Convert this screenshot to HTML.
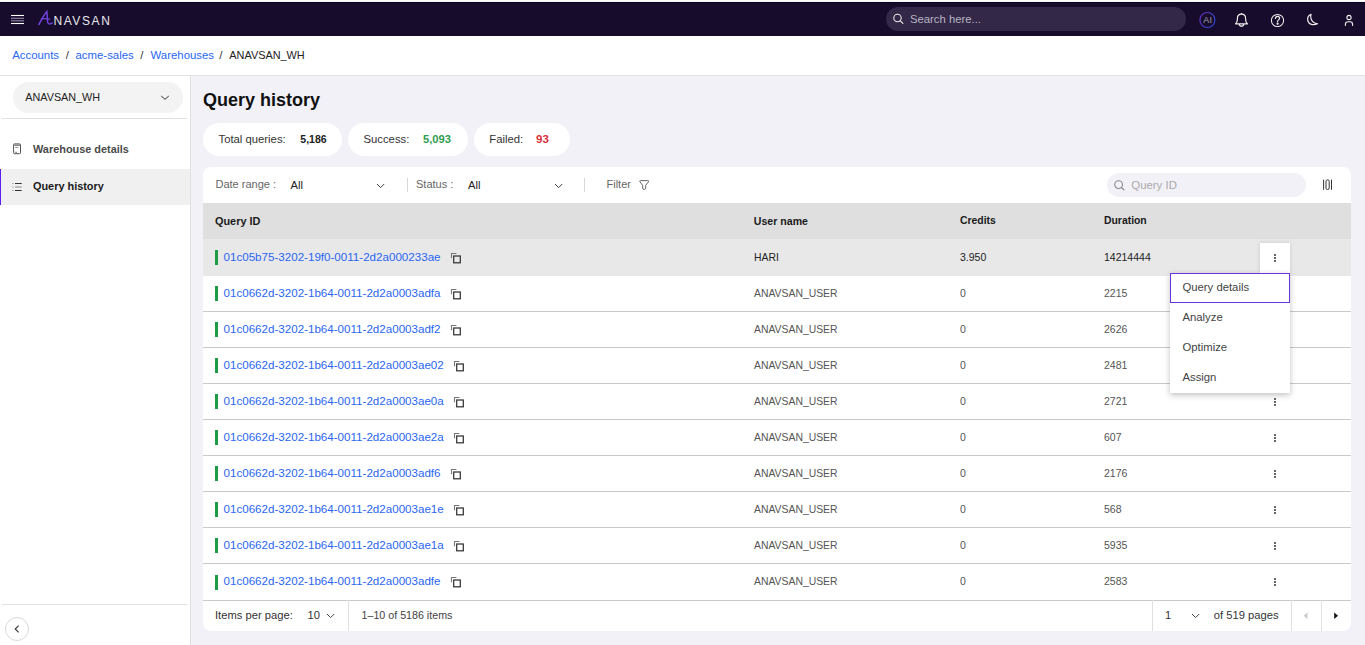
<!DOCTYPE html>
<html><head><meta charset="utf-8">
<style>
*{box-sizing:border-box;margin:0;padding:0}
html,body{width:1365px;height:645px;overflow:hidden;background:#fff;font-family:"Liberation Sans",sans-serif;color:#222;position:relative}
.abs{position:absolute}
.t{position:absolute;white-space:nowrap;line-height:1}
</style></head>
<body>
<div class="abs" style="left:0px;top:0px;width:1365px;height:1px;background:#fcfcfc"></div>
<div class="abs" style="left:0px;top:1px;width:1365px;height:1px;background:#f6f6f4"></div>
<div class="abs" style="left:0px;top:2px;width:1365px;height:34px;background:#170c2c"></div>
<div class="abs" style="left:0px;top:2px;width:1365px;height:1px;background:#0a0420"></div>
<svg class="abs" style="left:0;top:0" width="130" height="36"><g stroke="#fff" stroke-width="1.1"><line x1="11" y1="15.5" x2="24" y2="15.5"/><line x1="11" y1="18.3" x2="24" y2="18.3" stroke="#948aa8"/><line x1="11" y1="20.8" x2="24" y2="20.8" stroke="#948aa8"/><line x1="11" y1="23.5" x2="24" y2="23.5"/></g><path d="M38.8 24.6 C41.5 19.5 44.5 14 46.8 11.4 C47.2 14.5 47.3 19 47.7 22.4 C48.2 24.4 50 24.2 52.2 22.8" fill="none" stroke="#7142d9" stroke-width="1.5" stroke-linecap="round"/><path d="M41.3 18.8 C44 18.6 47 18.6 49.6 19.2" fill="none" stroke="#7142d9" stroke-width="1.3" stroke-linecap="round"/></svg>
<div class="t" style="left:53.40px;top:15px;font-size:12px;color:#e8e8ec;font-weight:normal;letter-spacing:1.6px">NAVSAN</div>
<div class="abs" style="left:886px;top:7px;width:300px;height:24px;background:#342848;border-radius:12px"></div>
<svg class="abs" style="left:890px;top:10px" width="18" height="18"><circle cx="7.5" cy="8" r="3.7" fill="none" stroke="#e8e8e8" stroke-width="1.1"/><line x1="10.3" y1="10.8" x2="12.9" y2="13.4" stroke="#e8e8e8" stroke-width="1.2" stroke-linecap="round"/></svg>
<div class="t" style="left:910.00px;top:14px;font-size:11.3px;color:#b8b4c4;font-weight:normal;">Search here...</div>
<svg class="abs" style="left:1190px;top:4px" width="175" height="32"><defs><linearGradient id="aig" x1="0" y1="0.2" x2="1" y2="0.8"><stop offset="0" stop-color="#6630c0"/><stop offset="1" stop-color="#2a4ad0"/></linearGradient></defs><circle cx="17.4" cy="16" r="7.5" fill="none" stroke="url(#aig)" stroke-width="1.2"/><g fill="none" stroke="#eee" stroke-width="1.2" stroke-linejoin="round"><path d="M45.6 19.8 C46.9 18.7 47.4 17.3 47.4 15.3 L47.4 14.4 C47.4 11.8 49.2 10.1 51.5 10.1 C53.8 10.1 55.6 11.8 55.6 14.4 L55.6 15.3 C55.6 17.3 56.1 18.7 57.4 19.8 Z"/><path d="M49.3 19.9 A2.2 2.2 0 0 0 53.7 19.9"/><line x1="51.5" y1="10" x2="51.5" y2="9.1"/><circle cx="87.5" cy="16.5" r="6.1" stroke-width="1.05"/><path d="M85.5 14.5 C85.5 12.9 86.5 12.3 87.6 12.3 C88.8 12.3 89.6 13.1 89.6 14.2 C89.6 15.6 87.6 15.8 87.6 17.6" stroke-linecap="round"/><circle cx="87.6" cy="19.7" r="0.5" fill="#eee"/><path d="M121 10.3 C118.2 11.5 117.2 14.5 118 17.3 C119 20.3 122.8 21.8 127.6 19.8 C124.3 19.3 121.8 17.4 121 14.6 C120.6 13.1 120.6 11.6 121 10.3 Z"/><circle cx="159" cy="13.5" r="2.1" stroke-width="1.1"/><path d="M155.4 21.4 L155.4 20.4 C155.4 18.8 156.5 17.8 158 17.8 L160 17.8 C161.5 17.8 162.6 18.8 162.6 20.4 L162.6 21.4" stroke-linecap="round" stroke-width="1.1"/></g></svg>
<div class="t" style="left:1203.20px;top:16px;font-size:9px;color:#a0a0aa;font-weight:normal;letter-spacing:0.3px">AI</div>
<div class="abs" style="left:0px;top:36px;width:1365px;height:39px;background:#fff"></div>
<div class="abs" style="left:0px;top:75px;width:1365px;height:1px;background:#e2e2e2"></div>
<div class="t" style="left:12.20px;top:50px;font-size:11.4px;color:#2a66f2;font-weight:normal;">Accounts</div>
<div class="t" style="left:65.80px;top:50px;font-size:11.4px;color:#333;font-weight:normal;">/</div>
<div class="t" style="left:75.50px;top:50px;font-size:11.4px;color:#2a66f2;font-weight:normal;">acme-sales</div>
<div class="t" style="left:140.20px;top:50px;font-size:11.4px;color:#333;font-weight:normal;">/</div>
<div class="t" style="left:150.50px;top:50px;font-size:11.4px;color:#2a66f2;font-weight:normal;">Warehouses</div>
<div class="t" style="left:219.20px;top:50px;font-size:11.4px;color:#333;font-weight:normal;">/</div>
<div class="t" style="left:229.30px;top:50px;font-size:10.9px;color:#222;font-weight:normal;">ANAVSAN_WH</div>
<div class="abs" style="left:0px;top:76px;width:190px;height:569px;background:#fff"></div>
<div class="abs" style="left:190px;top:76px;width:1px;height:569px;background:#e0e0e0"></div>
<div class="abs" style="left:13px;top:82px;width:170px;height:31px;background:#f3f3f3;border-radius:16px"></div>
<div class="t" style="left:25.30px;top:92px;font-size:10.8px;color:#222;font-weight:normal;">ANAVSAN_WH</div>
<svg class="abs" style="left:155px;top:90px" width="20" height="16"><path d="M6.2 6 L10 9.3 L13.8 6" fill="none" stroke="#333" stroke-width="1"/></svg>
<div class="abs" style="left:2px;top:118px;width:185px;height:1px;background:#e0e0e0"></div>
<svg class="abs" style="left:8px;top:138px" width="20" height="22"><rect x="5.6" y="5.9" width="6.9" height="9.8" rx="0.8" fill="none" stroke="#555" stroke-width="1"/><line x1="6.2" y1="7.2" x2="12" y2="7.2" stroke="#555" stroke-width="1"/><line x1="7.2" y1="9.4" x2="10.3" y2="9.4" stroke="#777" stroke-width="0.8"/><line x1="7.3" y1="14.3" x2="8.8" y2="14.3" stroke="#555" stroke-width="1"/></svg>
<div class="t" style="left:33.00px;top:144px;font-size:10.9px;color:#4a4a4a;font-weight:bold;">Warehouse details</div>
<div class="abs" style="left:0px;top:169px;width:190px;height:36px;background:#f0f0f0"></div>
<div class="abs" style="left:0px;top:169px;width:1px;height:36px;background:#5a1ff0"></div>
<svg class="abs" style="left:8px;top:176px" width="20" height="22"><g stroke="#333" stroke-width="1"><line x1="4.3" y1="7.5" x2="5.6" y2="7.5" stroke="#999"/><line x1="4.3" y1="11" x2="5.6" y2="11" stroke="#999"/><line x1="4.3" y1="14.5" x2="5.6" y2="14.5" stroke="#999"/><line x1="7" y1="7.5" x2="13.7" y2="7.5"/><line x1="7" y1="11" x2="13.7" y2="11" stroke="#888"/><line x1="7" y1="14.5" x2="13.7" y2="14.5"/></g></svg>
<div class="t" style="left:33.00px;top:181px;font-size:10.9px;color:#1a1a1a;font-weight:bold;">Query history</div>
<div class="abs" style="left:2px;top:604px;width:185px;height:1px;background:#e0e0e0"></div>
<svg class="abs" style="left:4px;top:616px" width="27" height="27"><circle cx="13" cy="13" r="11.5" fill="#fff" stroke="#d8d8d8" stroke-width="1"/><path d="M14.6 9.6 L11.2 13 L14.6 16.4" fill="none" stroke="#333" stroke-width="1.1"/></svg>
<div class="abs" style="left:191px;top:76px;width:1174px;height:569px;background:#f3f1f8"></div>
<div class="t" style="left:203.00px;top:91px;font-size:18px;color:#111;font-weight:bold;">Query history</div>
<div class="abs" style="left:203px;top:123px;width:139px;height:33px;background:#fff;border-radius:17px"></div>
<div class="abs" style="left:348px;top:123px;width:120px;height:33px;background:#fff;border-radius:17px"></div>
<div class="abs" style="left:474px;top:123px;width:96px;height:33px;background:#fff;border-radius:17px"></div>
<div class="t" style="left:218.50px;top:134px;font-size:11.3px;color:#333;font-weight:normal;">Total queries:</div>
<div class="t" style="left:300.30px;top:134px;font-size:10.5px;color:#222;font-weight:bold;">5,186</div>
<div class="t" style="left:363.50px;top:134px;font-size:11.3px;color:#333;font-weight:normal;">Success:</div>
<div class="t" style="left:423.00px;top:134px;font-size:11.2px;color:#2e9e4e;font-weight:bold;">5,093</div>
<div class="t" style="left:489.30px;top:134px;font-size:11.3px;color:#333;font-weight:normal;">Failed:</div>
<div class="t" style="left:536.00px;top:134px;font-size:11.5px;color:#d9303a;font-weight:bold;">93</div>
<div class="abs" style="left:203px;top:167px;width:1148px;height:464px;background:#fff;border-radius:8px;overflow:hidden"></div>
<div class="t" style="left:215.50px;top:179px;font-size:11px;color:#666;font-weight:normal;">Date range :</div>
<div class="t" style="left:290.50px;top:180px;font-size:11.2px;color:#222;font-weight:normal;">All</div>
<svg class="abs" style="left:375px;top:182px" width="12" height="8"><path d="M2 2 L5.6 5.6 L9.2 2" fill="none" stroke="#444" stroke-width="1"/></svg>
<div class="abs" style="left:407px;top:178px;width:1px;height:14px;background:#d8d8d8"></div>
<div class="t" style="left:416.00px;top:179px;font-size:11px;color:#666;font-weight:normal;">Status :</div>
<div class="t" style="left:468.00px;top:180px;font-size:11.2px;color:#222;font-weight:normal;">All</div>
<svg class="abs" style="left:553px;top:182px" width="12" height="8"><path d="M2 2 L5.6 5.6 L9.2 2" fill="none" stroke="#444" stroke-width="1"/></svg>
<div class="abs" style="left:584px;top:178px;width:1px;height:14px;background:#d8d8d8"></div>
<div class="t" style="left:606.50px;top:179px;font-size:11px;color:#666;font-weight:normal;">Filter</div>
<svg class="abs" style="left:636px;top:177px" width="16" height="16"><path d="M4.6 3.6 L11.8 3.6 Q13.2 3.6 12.4 4.9 L9.7 8.3 L9.7 11.3 Q9.7 12.4 8.2 12.4 Q6.7 12.4 6.7 11.3 L6.7 8.3 L4 4.9 Q3.2 3.6 4.6 3.6 Z" fill="none" stroke="#666" stroke-width="1" stroke-linejoin="round"/></svg>
<div class="abs" style="left:1107px;top:173px;width:199px;height:24px;background:#f3f1f8;border-radius:12px"></div>
<svg class="abs" style="left:1110px;top:177px" width="18" height="16"><circle cx="8.6" cy="7.6" r="3.9" fill="none" stroke="#888" stroke-width="1.1"/><line x1="11.5" y1="10.5" x2="14" y2="13" stroke="#888" stroke-width="1.1" stroke-linecap="round"/></svg>
<div class="t" style="left:1131.30px;top:180px;font-size:11.4px;color:#aaa;font-weight:normal;">Query ID</div>
<svg class="abs" style="left:1320px;top:177px" width="16" height="16"><g stroke="#333" stroke-width="1"><line x1="3.6" y1="2.6" x2="3.6" y2="12.8"/><line x1="11.5" y1="2.6" x2="11.5" y2="12.8"/></g><rect x="6" y="2.9" width="3.2" height="9.6" rx="1.4" fill="none" stroke="#333" stroke-width="1"/></svg>
<div class="abs" style="left:203px;top:203px;width:1148px;height:36px;background:#dfdfdf"></div>
<div class="t" style="left:215.00px;top:216px;font-size:10.9px;color:#1a1a1a;font-weight:bold;">Query ID</div>
<div class="t" style="left:753.80px;top:216px;font-size:10.6px;color:#1a1a1a;font-weight:bold;">User name</div>
<div class="t" style="left:960.00px;top:216px;font-size:10.4px;color:#1a1a1a;font-weight:bold;">Credits</div>
<div class="t" style="left:1104.00px;top:216px;font-size:10.4px;color:#1a1a1a;font-weight:bold;">Duration</div>
<div class="abs" style="left:203px;top:239px;width:1148px;height:37px;background:#e8e8e8"></div>
<div class="abs" style="left:215px;top:250px;width:3px;height:15px;background:#1f9a45"></div>
<div class="t" style="left:223.50px;top:251px;font-size:11.6px;color:#2a66f2;font-weight:normal;">01c05b75-3202-19f0-0011-2d2a000233ae<svg style="position:absolute;right:-20px;top:1px" width="12" height="13"><path d="M2.5 6.2 L2.5 1.5 L7.4 1.5" fill="none" stroke="#777" stroke-width="1.1"/><rect x="4.7" y="4" width="6.6" height="6.8" fill="none" stroke="#333" stroke-width="1.25"/></svg></div>
<div class="t" style="left:754.00px;top:253px;font-size:10.4px;color:#222;font-weight:normal;">HARI</div>
<div class="t" style="left:960.00px;top:252px;font-size:10.5px;color:#222;font-weight:normal;">3.950</div>
<div class="t" style="left:1104.00px;top:252px;font-size:10.5px;color:#222;font-weight:normal;">14214444</div>
<div class="abs" style="left:203px;top:311px;width:1148px;height:1px;background:#c9c9c9"></div>
<div class="abs" style="left:215px;top:286px;width:3px;height:15px;background:#1f9a45"></div>
<div class="t" style="left:223.50px;top:287px;font-size:11.6px;color:#2a66f2;font-weight:normal;">01c0662d-3202-1b64-0011-2d2a0003adfa<svg style="position:absolute;right:-20px;top:1px" width="12" height="13"><path d="M2.5 6.2 L2.5 1.5 L7.4 1.5" fill="none" stroke="#777" stroke-width="1.1"/><rect x="4.7" y="4" width="6.6" height="6.8" fill="none" stroke="#333" stroke-width="1.25"/></svg></div>
<div class="t" style="left:754.00px;top:289px;font-size:10.4px;color:#555;font-weight:normal;">ANAVSAN_USER</div>
<div class="t" style="left:960.00px;top:288px;font-size:10.5px;color:#555;font-weight:normal;">0</div>
<div class="t" style="left:1104.00px;top:288px;font-size:10.5px;color:#555;font-weight:normal;">2215</div>
<div class="abs" style="left:203px;top:347px;width:1148px;height:1px;background:#c9c9c9"></div>
<div class="abs" style="left:215px;top:322px;width:3px;height:15px;background:#1f9a45"></div>
<div class="t" style="left:223.50px;top:323px;font-size:11.6px;color:#2a66f2;font-weight:normal;">01c0662d-3202-1b64-0011-2d2a0003adf2<svg style="position:absolute;right:-20px;top:1px" width="12" height="13"><path d="M2.5 6.2 L2.5 1.5 L7.4 1.5" fill="none" stroke="#777" stroke-width="1.1"/><rect x="4.7" y="4" width="6.6" height="6.8" fill="none" stroke="#333" stroke-width="1.25"/></svg></div>
<div class="t" style="left:754.00px;top:325px;font-size:10.4px;color:#555;font-weight:normal;">ANAVSAN_USER</div>
<div class="t" style="left:960.00px;top:324px;font-size:10.5px;color:#555;font-weight:normal;">0</div>
<div class="t" style="left:1104.00px;top:324px;font-size:10.5px;color:#555;font-weight:normal;">2626</div>
<div class="abs" style="left:203px;top:383px;width:1148px;height:1px;background:#c9c9c9"></div>
<div class="abs" style="left:215px;top:358px;width:3px;height:15px;background:#1f9a45"></div>
<div class="t" style="left:223.50px;top:359px;font-size:11.6px;color:#2a66f2;font-weight:normal;">01c0662d-3202-1b64-0011-2d2a0003ae02<svg style="position:absolute;right:-20px;top:1px" width="12" height="13"><path d="M2.5 6.2 L2.5 1.5 L7.4 1.5" fill="none" stroke="#777" stroke-width="1.1"/><rect x="4.7" y="4" width="6.6" height="6.8" fill="none" stroke="#333" stroke-width="1.25"/></svg></div>
<div class="t" style="left:754.00px;top:361px;font-size:10.4px;color:#555;font-weight:normal;">ANAVSAN_USER</div>
<div class="t" style="left:960.00px;top:360px;font-size:10.5px;color:#555;font-weight:normal;">0</div>
<div class="t" style="left:1104.00px;top:360px;font-size:10.5px;color:#555;font-weight:normal;">2481</div>
<div class="abs" style="left:203px;top:419px;width:1148px;height:1px;background:#c9c9c9"></div>
<div class="abs" style="left:215px;top:394px;width:3px;height:15px;background:#1f9a45"></div>
<div class="t" style="left:223.50px;top:395px;font-size:11.6px;color:#2a66f2;font-weight:normal;">01c0662d-3202-1b64-0011-2d2a0003ae0a<svg style="position:absolute;right:-20px;top:1px" width="12" height="13"><path d="M2.5 6.2 L2.5 1.5 L7.4 1.5" fill="none" stroke="#777" stroke-width="1.1"/><rect x="4.7" y="4" width="6.6" height="6.8" fill="none" stroke="#333" stroke-width="1.25"/></svg></div>
<div class="t" style="left:754.00px;top:397px;font-size:10.4px;color:#555;font-weight:normal;">ANAVSAN_USER</div>
<div class="t" style="left:960.00px;top:396px;font-size:10.5px;color:#555;font-weight:normal;">0</div>
<div class="t" style="left:1104.00px;top:396px;font-size:10.5px;color:#555;font-weight:normal;">2721</div>
<div class="abs" style="left:203px;top:455px;width:1148px;height:1px;background:#c9c9c9"></div>
<div class="abs" style="left:215px;top:430px;width:3px;height:15px;background:#1f9a45"></div>
<div class="t" style="left:223.50px;top:431px;font-size:11.6px;color:#2a66f2;font-weight:normal;">01c0662d-3202-1b64-0011-2d2a0003ae2a<svg style="position:absolute;right:-20px;top:1px" width="12" height="13"><path d="M2.5 6.2 L2.5 1.5 L7.4 1.5" fill="none" stroke="#777" stroke-width="1.1"/><rect x="4.7" y="4" width="6.6" height="6.8" fill="none" stroke="#333" stroke-width="1.25"/></svg></div>
<div class="t" style="left:754.00px;top:433px;font-size:10.4px;color:#555;font-weight:normal;">ANAVSAN_USER</div>
<div class="t" style="left:960.00px;top:432px;font-size:10.5px;color:#555;font-weight:normal;">0</div>
<div class="t" style="left:1104.00px;top:432px;font-size:10.5px;color:#555;font-weight:normal;">607</div>
<div class="abs" style="left:203px;top:491px;width:1148px;height:1px;background:#c9c9c9"></div>
<div class="abs" style="left:215px;top:466px;width:3px;height:15px;background:#1f9a45"></div>
<div class="t" style="left:223.50px;top:467px;font-size:11.6px;color:#2a66f2;font-weight:normal;">01c0662d-3202-1b64-0011-2d2a0003adf6<svg style="position:absolute;right:-20px;top:1px" width="12" height="13"><path d="M2.5 6.2 L2.5 1.5 L7.4 1.5" fill="none" stroke="#777" stroke-width="1.1"/><rect x="4.7" y="4" width="6.6" height="6.8" fill="none" stroke="#333" stroke-width="1.25"/></svg></div>
<div class="t" style="left:754.00px;top:469px;font-size:10.4px;color:#555;font-weight:normal;">ANAVSAN_USER</div>
<div class="t" style="left:960.00px;top:468px;font-size:10.5px;color:#555;font-weight:normal;">0</div>
<div class="t" style="left:1104.00px;top:468px;font-size:10.5px;color:#555;font-weight:normal;">2176</div>
<div class="abs" style="left:203px;top:527px;width:1148px;height:1px;background:#c9c9c9"></div>
<div class="abs" style="left:215px;top:502px;width:3px;height:15px;background:#1f9a45"></div>
<div class="t" style="left:223.50px;top:503px;font-size:11.6px;color:#2a66f2;font-weight:normal;">01c0662d-3202-1b64-0011-2d2a0003ae1e<svg style="position:absolute;right:-20px;top:1px" width="12" height="13"><path d="M2.5 6.2 L2.5 1.5 L7.4 1.5" fill="none" stroke="#777" stroke-width="1.1"/><rect x="4.7" y="4" width="6.6" height="6.8" fill="none" stroke="#333" stroke-width="1.25"/></svg></div>
<div class="t" style="left:754.00px;top:505px;font-size:10.4px;color:#555;font-weight:normal;">ANAVSAN_USER</div>
<div class="t" style="left:960.00px;top:504px;font-size:10.5px;color:#555;font-weight:normal;">0</div>
<div class="t" style="left:1104.00px;top:504px;font-size:10.5px;color:#555;font-weight:normal;">568</div>
<div class="abs" style="left:203px;top:563px;width:1148px;height:1px;background:#c9c9c9"></div>
<div class="abs" style="left:215px;top:538px;width:3px;height:15px;background:#1f9a45"></div>
<div class="t" style="left:223.50px;top:539px;font-size:11.6px;color:#2a66f2;font-weight:normal;">01c0662d-3202-1b64-0011-2d2a0003ae1a<svg style="position:absolute;right:-20px;top:1px" width="12" height="13"><path d="M2.5 6.2 L2.5 1.5 L7.4 1.5" fill="none" stroke="#777" stroke-width="1.1"/><rect x="4.7" y="4" width="6.6" height="6.8" fill="none" stroke="#333" stroke-width="1.25"/></svg></div>
<div class="t" style="left:754.00px;top:541px;font-size:10.4px;color:#555;font-weight:normal;">ANAVSAN_USER</div>
<div class="t" style="left:960.00px;top:540px;font-size:10.5px;color:#555;font-weight:normal;">0</div>
<div class="t" style="left:1104.00px;top:540px;font-size:10.5px;color:#555;font-weight:normal;">5935</div>
<div class="abs" style="left:215px;top:575px;width:3px;height:15px;background:#1f9a45"></div>
<div class="t" style="left:223.50px;top:575px;font-size:11.6px;color:#2a66f2;font-weight:normal;">01c0662d-3202-1b64-0011-2d2a0003adfe<svg style="position:absolute;right:-20px;top:1px" width="12" height="13"><path d="M2.5 6.2 L2.5 1.5 L7.4 1.5" fill="none" stroke="#777" stroke-width="1.1"/><rect x="4.7" y="4" width="6.6" height="6.8" fill="none" stroke="#333" stroke-width="1.25"/></svg></div>
<div class="t" style="left:754.00px;top:577px;font-size:10.4px;color:#555;font-weight:normal;">ANAVSAN_USER</div>
<div class="t" style="left:960.00px;top:576px;font-size:10.5px;color:#555;font-weight:normal;">0</div>
<div class="t" style="left:1104.00px;top:576px;font-size:10.5px;color:#555;font-weight:normal;">2583</div>
<div class="abs" style="left:203px;top:600px;width:1148px;height:1px;background:#c9c9c9"></div>
<div class="t" style="left:215.00px;top:610px;font-size:11.2px;color:#333;font-weight:normal;">Items per page:</div>
<div class="t" style="left:307.50px;top:610px;font-size:11.2px;color:#333;font-weight:normal;">10</div>
<svg class="abs" style="left:325px;top:611.5px" width="12" height="8"><path d="M2 2 L5.6 5.6 L9.2 2" fill="none" stroke="#444" stroke-width="1"/></svg>
<div class="abs" style="left:348px;top:600px;width:1px;height:31px;background:#e0e0e0"></div>
<div class="t" style="left:361.50px;top:610px;font-size:10.7px;color:#444;font-weight:normal;">1–10 of 5186 items</div>
<div class="abs" style="left:1152px;top:600px;width:1px;height:31px;background:#e0e0e0"></div>
<div class="t" style="left:1165.00px;top:610px;font-size:11.2px;color:#333;font-weight:normal;">1</div>
<svg class="abs" style="left:1189.5px;top:611.5px" width="12" height="8"><path d="M2 2 L5.6 5.6 L9.2 2" fill="none" stroke="#444" stroke-width="1"/></svg>
<div class="t" style="left:1213.80px;top:610px;font-size:11.2px;color:#333;font-weight:normal;">of 519 pages</div>
<div class="abs" style="left:1291px;top:600px;width:1px;height:31px;background:#e0e0e0"></div>
<div class="abs" style="left:1321px;top:600px;width:1px;height:31px;background:#e0e0e0"></div>
<svg class="abs" style="left:1300px;top:610px" width="10" height="12"><path d="M7.5 2.5 L3.8 5.8 L7.5 9 Z" fill="#c8c8c8"/></svg>
<svg class="abs" style="left:1330px;top:610px" width="10" height="12"><path d="M4.2 2.5 L8 5.8 L4.2 9 Z" fill="#111"/></svg>
<svg class="abs" style="left:1273px;top:397px" width="4" height="10"><g fill="#666"><rect x="1" y="1" width="2" height="2"/><rect x="1" y="4" width="2" height="2"/><rect x="1" y="7" width="2" height="2"/></g></svg>
<svg class="abs" style="left:1273px;top:433px" width="4" height="10"><g fill="#666"><rect x="1" y="1" width="2" height="2"/><rect x="1" y="4" width="2" height="2"/><rect x="1" y="7" width="2" height="2"/></g></svg>
<svg class="abs" style="left:1273px;top:469px" width="4" height="10"><g fill="#666"><rect x="1" y="1" width="2" height="2"/><rect x="1" y="4" width="2" height="2"/><rect x="1" y="7" width="2" height="2"/></g></svg>
<svg class="abs" style="left:1273px;top:505px" width="4" height="10"><g fill="#666"><rect x="1" y="1" width="2" height="2"/><rect x="1" y="4" width="2" height="2"/><rect x="1" y="7" width="2" height="2"/></g></svg>
<svg class="abs" style="left:1273px;top:541px" width="4" height="10"><g fill="#666"><rect x="1" y="1" width="2" height="2"/><rect x="1" y="4" width="2" height="2"/><rect x="1" y="7" width="2" height="2"/></g></svg>
<svg class="abs" style="left:1273px;top:577px" width="4" height="10"><g fill="#666"><rect x="1" y="1" width="2" height="2"/><rect x="1" y="4" width="2" height="2"/><rect x="1" y="7" width="2" height="2"/></g></svg>
<div class="abs" style="left:1260px;top:243px;width:30px;height:30px;background:#fff;box-shadow:0 0 4px rgba(0,0,0,0.14)"></div>
<svg class="abs" style="left:1273px;top:253px" width="4" height="10"><g fill="#666"><rect x="1" y="1" width="2" height="2"/><rect x="1" y="4" width="2" height="2"/><rect x="1" y="7" width="2" height="2"/></g></svg>
<div class="abs" style="left:1170px;top:273px;width:120px;height:120px;background:#fff;box-shadow:0 2px 6px rgba(0,0,0,0.25)"></div>
<div class="abs" style="left:1170px;top:273px;width:120px;height:30px;border:1.5px solid #6a36e0;background:#fff"></div>
<div class="t" style="left:1182.50px;top:282px;font-size:11.3px;color:#444;font-weight:normal;">Query details</div>
<div class="t" style="left:1182.50px;top:312px;font-size:11.3px;color:#444;font-weight:normal;">Analyze</div>
<div class="t" style="left:1182.50px;top:342px;font-size:11.3px;color:#444;font-weight:normal;">Optimize</div>
<div class="t" style="left:1182.50px;top:372px;font-size:11.3px;color:#444;font-weight:normal;">Assign</div>
</body></html>
